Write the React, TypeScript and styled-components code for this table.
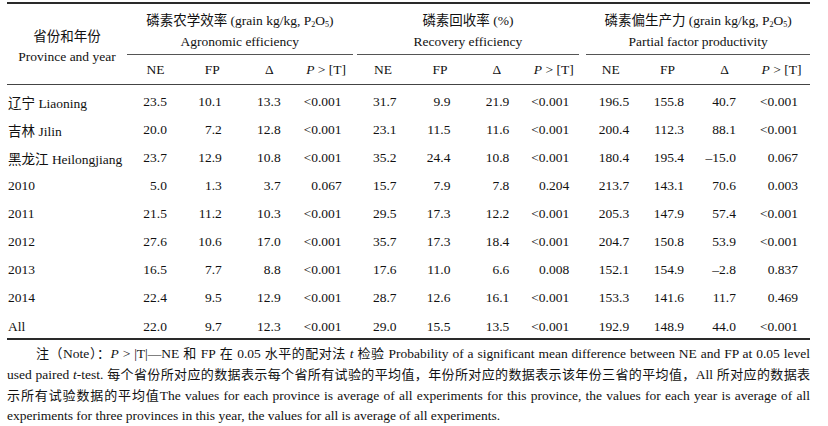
import React from "react";
import styled, { createGlobalStyle } from "styled-components";

const GlobalStyle = createGlobalStyle`
    html, body {
        margin: 0;
        padding: 0;
        background: #fff;
    }
    body {
        font-family: "Liberation Serif", "Noto Sans CJK SC", serif;
        color: #111;
    }
`;

// right padding of the numbers in each of the 12 value columns
const PADS = [17, 19, 17, 13, 15, 18, 16, 13, 10, 12, 17, 12];

const ROWS: { zh?: string; en: string; values: string[] }[] = [
    { zh: "辽宁", en: "Liaoning", values: ["23.5", "10.1", "13.3", "<0.001", "31.7", "9.9", "21.9", "<0.001", "196.5", "155.8", "40.7", "<0.001"] },
    { zh: "吉林", en: "Jilin", values: ["20.0", "7.2", "12.8", "<0.001", "23.1", "11.5", "11.6", "<0.001", "200.4", "112.3", "88.1", "<0.001"] },
    { zh: "黑龙江", en: "Heilongjiang", values: ["23.7", "12.9", "10.8", "<0.001", "35.2", "24.4", "10.8", "<0.001", "180.4", "195.4", "–15.0", "0.067"] },
    { en: "2010", values: ["5.0", "1.3", "3.7", "0.067", "15.7", "7.9", "7.8", "0.204", "213.7", "143.1", "70.6", "0.003"] },
    { en: "2011", values: ["21.5", "11.2", "10.3", "<0.001", "29.5", "17.3", "12.2", "<0.001", "205.3", "147.9", "57.4", "<0.001"] },
    { en: "2012", values: ["27.6", "10.6", "17.0", "<0.001", "35.7", "17.3", "18.4", "<0.001", "204.7", "150.8", "53.9", "<0.001"] },
    { en: "2013", values: ["16.5", "7.7", "8.8", "<0.001", "17.6", "11.0", "6.6", "0.008", "152.1", "154.9", "–2.8", "0.837"] },
    { en: "2014", values: ["22.4", "9.5", "12.9", "<0.001", "28.7", "12.6", "16.1", "<0.001", "153.3", "141.6", "11.7", "0.469"] },
    { en: "All", values: ["22.0", "9.7", "12.3", "<0.001", "29.0", "15.5", "13.5", "<0.001", "192.9", "148.9", "44.0", "<0.001"] },
];

const Page = styled.div`
    width: 803px;
    padding: 2px 0 0 7px;
`;

const Han = styled.span<{ $size?: number }>`
    font-family: "Noto Sans CJK SC", sans-serif;
    font-size: ${(p) => (p.$size ? `${p.$size}px` : "inherit")};
`;

const Latin = styled.span`
    font-family: "Liberation Serif", serif;
`;

const DataTable = styled.table`
    width: 803px;
    table-layout: fixed;
    border-collapse: collapse;
    border-top: 2px solid #2a2a2a;
    border-bottom: 2px solid #2a2a2a;
    font-size: 13.5px;

    col.label {
        width: 120px;
    }
`;

const CornerHead = styled.th`
    padding: 3px 0 0;
    font-weight: normal;
    text-align: center;
    vertical-align: middle;
    line-height: 20px;
    border-bottom: 1px solid #444;
`;

const GroupHead = styled.th`
    height: 50px;
    padding: 0;
    font-weight: normal;
    vertical-align: bottom;
`;

const GroupTitle = styled.div<{ $left: number; $right: number }>`
    margin: 0 ${(p) => p.$right}px 0 ${(p) => p.$left}px;
    padding: 5px 0 2px;
    line-height: 21px;
    text-align: center;
    white-space: nowrap;
    border-bottom: 1px solid #555;

    sub {
        font-size: 8px;
        vertical-align: -2px;
        line-height: 0;
    }
`;

const SubHead = styled.th`
    height: 29px;
    padding: 0;
    font-weight: normal;
    text-align: center;
    vertical-align: middle;
    white-space: nowrap;
    border-bottom: 1px solid #444;
`;

const Row = styled.tr<{ $first?: boolean; $last?: boolean }>`
    height: ${(p) => (p.$first ? 31 : p.$last ? 27 : 28)}px;

    td {
        padding-top: ${(p) => (p.$first ? 3 : p.$last ? 5 : 0)}px;
        padding-bottom: 0;
    }
`;

const LabelCell = styled.td`
    padding-left: 1px;
    text-align: left;
    vertical-align: middle;
    white-space: nowrap;
`;

const NumCell = styled.td<{ $pad: number }>`
    padding-right: ${(p) => p.$pad}px;
    text-align: right;
    vertical-align: middle;
    white-space: nowrap;
`;

const Notes = styled.div`
    margin-top: 3px;
    font-size: 13.5px;
    line-height: 20px;
`;

const NoteLine = styled.div<{ $indent?: boolean; $last?: boolean }>`
    text-indent: ${(p) => (p.$indent ? "29px" : "0")};
    text-align: justify;
    text-align-last: ${(p) => (p.$last ? "left" : "justify")};
    white-space: nowrap;
`;

const PValue = () => (
    <>
        <i>P</i> &gt; [T]
    </>
);

const P2O5 = () => (
    <>
        P<sub>2</sub>O<sub>5</sub>
    </>
);

const App = () => (
    <Page>
        <GlobalStyle />
        <DataTable>
            <colgroup>
                <col className="label" />
                {PADS.map((_, i) => (
                    <col key={i} />
                ))}
            </colgroup>
            <thead>
                <tr>
                    <CornerHead rowSpan={2}>
                        <Han>省份和年份</Han>
                        <br />
                        <Latin>Province and year</Latin>
                    </CornerHead>
                    <GroupHead colSpan={4}>
                        <GroupTitle $left={0} $right={2}>
                            <Han>磷素农学效率</Han> <Latin>(grain kg/kg, <P2O5 />)</Latin>
                            <br />
                            <Latin>Agronomic efficiency</Latin>
                        </GroupTitle>
                    </GroupHead>
                    <GroupHead colSpan={4}>
                        <GroupTitle $left={2} $right={3}>
                            <Han>磷素回收率</Han> <Latin>(%)</Latin>
                            <br />
                            <Latin>Recovery efficiency</Latin>
                        </GroupTitle>
                    </GroupHead>
                    <GroupHead colSpan={4}>
                        <GroupTitle $left={4} $right={0}>
                            <Han>磷素偏生产力</Han> <Latin>(grain kg/kg, <P2O5 />)</Latin>
                            <br />
                            <Latin>Partial factor productivity</Latin>
                        </GroupTitle>
                    </GroupHead>
                </tr>
                <tr>
                    {[0, 1, 2].map((g) => (
                        <React.Fragment key={g}>
                            <SubHead>NE</SubHead>
                            <SubHead>FP</SubHead>
                            <SubHead>Δ</SubHead>
                            <SubHead>
                                <PValue />
                            </SubHead>
                        </React.Fragment>
                    ))}
                </tr>
            </thead>
            <tbody>
                {ROWS.map((row, r) => (
                    <Row key={r} $first={r === 0} $last={r === ROWS.length - 1}>
                        <LabelCell>
                            {row.zh && <Han>{row.zh}</Han>}
                            {row.zh && " "}
                            <Latin>{row.en}</Latin>
                        </LabelCell>
                        {row.values.map((v, i) => (
                            <NumCell key={i} $pad={PADS[i]}>
                                {v}
                            </NumCell>
                        ))}
                    </Row>
                ))}
            </tbody>
        </DataTable>
        <Notes>
            <NoteLine $indent>
                <Han $size={13}>注（</Han>
                <Latin>Note</Latin>
                <Han $size={13}>）：</Han>
                <Latin>
                    <i>P</i> &gt; |T|—NE
                </Latin>{" "}
                <Han $size={13}>和</Han> <Latin>FP</Latin> <Han $size={13}>在</Han> <Latin>0.05</Latin>{" "}
                <Han $size={13}>水平的配对法</Han> <Latin><i>t</i></Latin> <Han $size={13}>检验</Han>{" "}
                <Latin>Probability of a significant mean difference between NE and FP at 0.05 level</Latin>
            </NoteLine>
            <NoteLine>
                <Latin>
                    used paired <i>t</i>-test.
                </Latin>{" "}
                <Han $size={13}>
                    每个省份所对应的数据表示每个省所有试验的平均值，年份所对应的数据表示该年份三省的平均值，
                </Han>
                <Latin>All</Latin> <Han $size={13}>所对应的数据表</Han>
            </NoteLine>
            <NoteLine>
                <Han $size={13}>示所有试验数据的平均值</Han>
                <Latin>
                    The values for each province is average of all experiments for this province, the values for
                    each year is average of all
                </Latin>
            </NoteLine>
            <NoteLine $last>
                <Latin>experiments for three provinces in this year, the values for all is average of all experiments.</Latin>
            </NoteLine>
        </Notes>
    </Page>
);

export default App;
